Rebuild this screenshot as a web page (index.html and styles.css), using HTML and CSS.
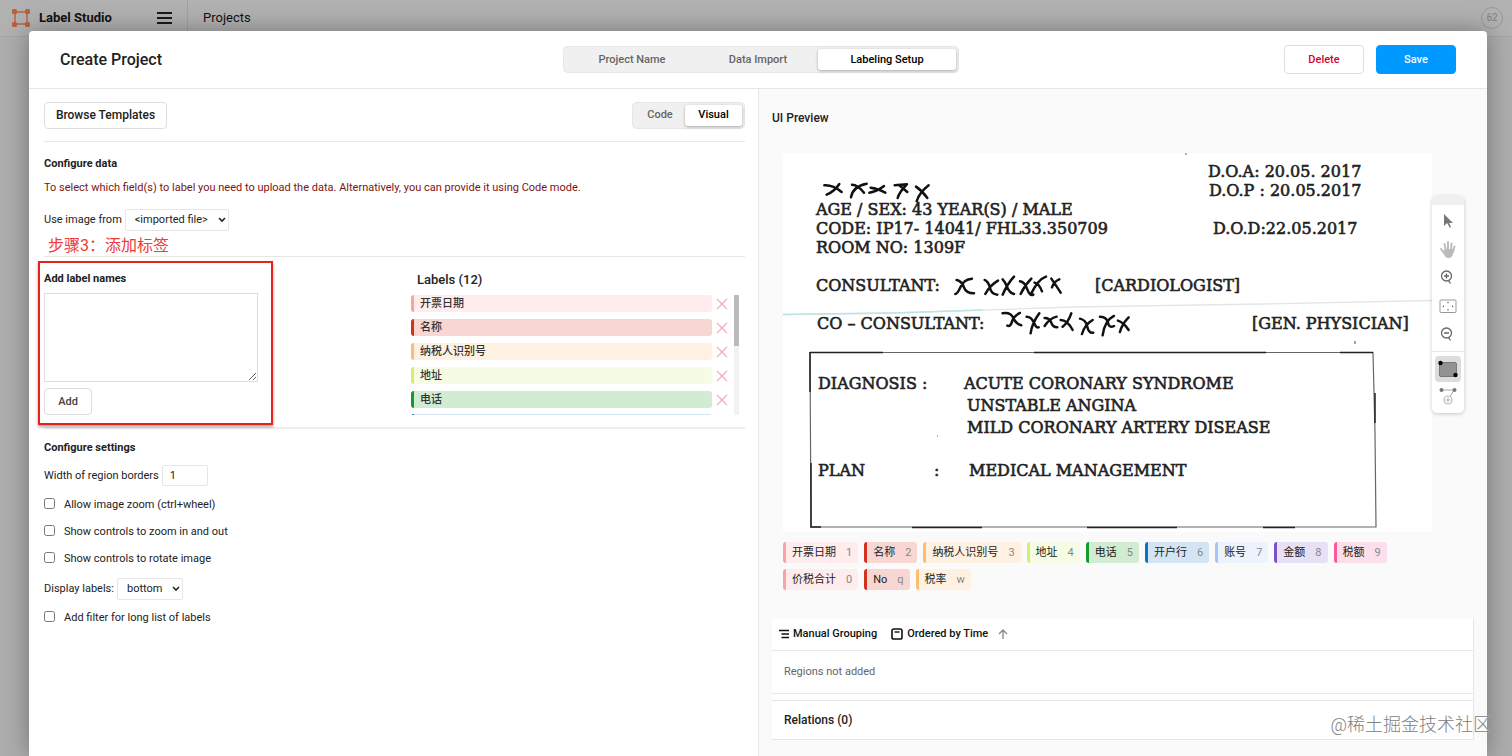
FILE: index.html
```html
<!DOCTYPE html>
<html lang="en">
<head>
<meta charset="utf-8">
<title>Label Studio</title>
<link rel="stylesheet" href="styles.css">
</head>
<body>
<header class="topbar">
  <a class="brand" href="#">
    <svg class="brand-logo" viewBox="0 0 18 18"><g fill="none" stroke="#b9603a" stroke-width="1.4"><path d="M3 3h12v12H3z"/></g><g fill="#b9603a"><rect width="5" height="5" rx="1.5"/><rect x="13" width="5" height="5" rx="1.5"/><rect y="13" width="5" height="5" rx="1.5"/><rect x="13" y="13" width="5" height="5" rx="1.5"/></g></svg>
    <span>Label Studio</span>
  </a>
  <button class="menu" aria-label="Menu"><svg viewBox="0 0 15 12"><path d="M0 1h15M0 6h15M0 11h15" stroke="#1b1b1b" stroke-width="2"/></svg></button>
  <nav class="crumbs"><a href="#">Projects</a></nav>
  <span class="avatar">62</span>
</header>

<main class="modal">
  <header class="modal-head">
    <h1>Create Project</h1>
    <div class="tabs steps">
      <button>Project Name</button><button>Data Import</button><button class="on">Labeling Setup</button>
    </div>
    <div class="actions"><button class="btn danger">Delete</button><button class="btn primary">Save</button></div>
  </header>

  <div class="columns">
    <section class="config">
      <div class="config-bar">
        <button class="btn browse">Browse Templates</button>
        <div class="tabs modes"><button>Code</button><button class="on">Visual</button></div>
      </div>

      <div class="block data">
        <h2>Configure data</h2>
        <p class="warn">To select which field(s) to label you need to upload the data. Alternatively, you can provide it using Code mode.</p>
        <div class="field">
          <label for="src">Use image from</label>
          <span class="select"><select id="src"><option>&lt;imported file&gt;</option></select><svg viewBox="0 0 8 6"><path d="M1 1l3 3 3-3" fill="none" stroke="#222" stroke-width="1.6"/></svg></span>
        </div>
        <p class="note">步骤3：添加标签</p>
      </div>

      <div class="block labels">
        <div class="add">
          <label for="names">Add label names</label>
          <textarea id="names"></textarea>
          <button class="btn small">Add</button>
          <span class="highlight"></span>
        </div>
        <div class="list">
          <h3>Labels (12)</h3>
          <ul>
            <li><span class="tag c1">开票日期</span><button aria-label="Remove"><svg viewBox="0 0 10 10"><path d="M0 0l10 10M10 0L0 10"/></svg></button></li>
            <li><span class="tag c2">名称</span><button aria-label="Remove"><svg viewBox="0 0 10 10"><path d="M0 0l10 10M10 0L0 10"/></svg></button></li>
            <li><span class="tag c3">纳税人识别号</span><button aria-label="Remove"><svg viewBox="0 0 10 10"><path d="M0 0l10 10M10 0L0 10"/></svg></button></li>
            <li><span class="tag c4">地址</span><button aria-label="Remove"><svg viewBox="0 0 10 10"><path d="M0 0l10 10M10 0L0 10"/></svg></button></li>
            <li><span class="tag c5">电话</span><button aria-label="Remove"><svg viewBox="0 0 10 10"><path d="M0 0l10 10M10 0L0 10"/></svg></button></li>
            <li><span class="tag c6"></span></li>
          </ul>
          <span class="track"><span class="thumb"></span></span>
        </div>
      </div>

      <div class="block settings">
        <h2>Configure settings</h2>
        <div class="field"><label for="bw">Width of region borders</label><input id="bw" type="text" value="1"></div>
        <label class="check"><input type="checkbox">Allow image zoom (ctrl+wheel)</label>
        <label class="check"><input type="checkbox">Show controls to zoom in and out</label>
        <label class="check"><input type="checkbox">Show controls to rotate image</label>
        <div class="field display">
          <label for="pos">Display labels:</label>
          <span class="select"><select id="pos"><option>bottom</option></select><svg viewBox="0 0 8 6"><path d="M1 1l3 3 3-3" fill="none" stroke="#222" stroke-width="1.6"/></svg></span>
        </div>
        <label class="check"><input type="checkbox">Add filter for long list of labels</label>
      </div>
    </section>

    <section class="preview">
      <h3>UI Preview</h3>
      <div class="stage">
        <svg class="scan" viewBox="0 0 649 379">
          <rect width="649" height="379" fill="#fff"/>
          <path d="M0 161.500L110 160l180-6 190-3 169-3.500" fill="none" stroke="#dfe8e6" stroke-width="1.300"/>
          <path d="M0 161.500L110 160l90-3" fill="none" stroke="#bfe3e3" stroke-width="1.500"/>
          <g class="scan-text">
            <text x="425" y="24">D.O.A: 20.05. 2017</text>
            <text x="426" y="43">D.O.P : 20.05.2017</text>
            <text x="33" y="62">AGE / SEX: 43 YEAR(S) / MALE</text>
            <text x="33" y="81">CODE: IP17- 14041/ FHL33.350709</text>
            <text x="430" y="81">D.O.D:22.05.2017</text>
            <text x="33" y="100">ROOM NO: 1309F</text>
            <text x="33" y="138">CONSULTANT:</text>
            <text x="312" y="138">[CARDIOLOGIST]</text>
            <text x="34" y="176">CO – CONSULTANT:</text>
            <text x="469" y="176">[GEN. PHYSICIAN]</text>
            <text x="35" y="236">DIAGNOSIS :</text>
            <text x="181" y="236">ACUTE CORONARY SYNDROME</text>
            <text x="184" y="258">UNSTABLE ANGINA</text>
            <text x="184" y="280">MILD CORONARY ARTERY DISEASE</text>
            <text x="35" y="323">PLAN</text>
            <text x="151" y="323">:</text>
            <text x="186" y="323">MEDICAL MANAGEMENT</text>
          </g>
          <g fill="none" stroke="#666" stroke-width="1.200">
            <path d="M27 199.500h563l2 80 1 94.500H28z"/>
            <path d="M27 199.500h73M251 199.500h232M557 199.500h33M27 199v40M28 310v64h10M592 240v30M129 374.500h70M304 374.500h90M480 374.500h32" stroke="#222" stroke-width="1.500"/>
            <path d="M402 1h2M572 188v3M154 283h1"/>
          </g>
          <g transform="translate(-13 -13) scale(.3333)" fill="none" stroke="#111" stroke-width="7.500" stroke-linecap="round" stroke-linejoin="round">
            <path d="M163 136q25-2 52 20M208 132q-14 22-38 32M246 134q18 0 36 24M290 131q-42 8-47 41M302 143q22 2 44 15M342 138q-20 16-44 20M374 136l37-3M388 136l24 20M408 136q-20 20-25 38M438 140q18 12 34 34M476 136q-28 22-36 48"/>
            <path d="M560 420q16 4 22 22t30 18M606 416q-24 2-34 24t-16 22M644 420q12 6 16 24t22 20M684 422q-24 14-38 40M698 418q8 8 14 24t20 20M732 410q-20 22-34 54M750 424q14 2 22 24t18 16M784 416q-20 20-32 46M794 428q14 4 22 26M828 410q-24 8-46 54M844 416q14 20 28 42M868 418q-16 6-22 24"/>
            <path d="M698 520q24-4 32 14t24 22M750 519q-20 10-24 26t-14 12M770 530q14 0 22 18t14 14M808 520q-22 30-26 60M824 534q16 0 20 14t18 14M860 530q-20 4-36 28M872 540q20 0 36 30M904 520q-10 28-26 40M930 536q18 4 22 24t18 18M968 540q-24 14-32 42M990 530q20 0 24 18t18 10M1032 528q-28 14-34 58M1044 542q18 6 32 28M1076 532q-20 20-26 44"/>
          </g>
        </svg>
        <div class="tools">
          <span class="grip"></span>
          <button aria-label="Select"><svg viewBox="0 0 18 18"><path d="M5 2v12l3-3 3 5 1-1-2-4h4z" fill="#777"/></svg></button>
          <button aria-label="Pan"><svg viewBox="0 0 18 18"><path d="M2 9l3 4M5.500 4l1.500 7M9 2v9M12.500 3.500L12 11M15.500 6.500L14 12" stroke="#bbb" stroke-width="1.900" stroke-linecap="round"/><path d="M4 11l2-2h8.500l-.5 5q-1 4-4.500 4T5 14z" fill="#bbb"/></svg></button>
          <button aria-label="Zoom in"><svg viewBox="0 0 18 18"><g fill="none" stroke="#666" stroke-width="1.300"><circle cx="7.500" cy="8" r="5"/><path d="M9.500 12.500l2 3M5 8h5M7.500 5.500v5"/></g></svg></button>
          <button aria-label="Fit"><svg viewBox="0 0 18 18"><rect x="1" y="4" width="16" height="12.500" rx="1" fill="none" stroke="#999"/><path d="M8 7h2L9 5.500zM8 13.500h2L9 15zM5 9.300v2l-1.500-1zM13 9.300v2l1.500-1z" fill="#555"/></svg></button>
          <button aria-label="Zoom out"><svg viewBox="0 0 18 18"><g fill="none" stroke="#666" stroke-width="1.300"><circle cx="7.500" cy="9" r="5"/><path d="M9.500 13.500l2 3M5 9h5"/></g></svg></button>
          <hr>
          <button class="active" aria-label="Rectangle"><svg viewBox="0 0 20 18"><rect x="1.500" y="2.500" width="17" height="14" rx="1.500" fill="#929292" stroke="#777"/><circle cx="2.500" cy="3" r="2.200"/><circle cx="17.500" cy="15" r="2.200"/></svg></button>
          <button aria-label="Keypoint"><svg viewBox="0 0 18 18"><path d="M2 3h13l-4 7" fill="none" stroke="#aaa"/><circle cx="2.500" cy="3" r="2" fill="#777"/><circle cx="15.500" cy="3" r="2" fill="#777"/><circle cx="9" cy="13" r="4" fill="#fff" stroke="#bbb" stroke-width="1.200"/><path d="M6.500 13h5M9 10.500v5" stroke="#bbb" stroke-width="1.200"/></svg></button>
        </div>
      </div>
      <div class="chips">
        <span class="chip c1">开票日期<i>1</i></span><span class="chip c2">名称<i>2</i></span><span class="chip c3">纳税人识别号<i>3</i></span><span class="chip c4">地址<i>4</i></span><span class="chip c5">电话<i>5</i></span><span class="chip c6">开户行<i>6</i></span><span class="chip c7">账号<i>7</i></span><span class="chip c8">金额<i>8</i></span><span class="chip c9">税额<i>9</i></span><span class="chip c1">价税合计<i>0</i></span><span class="chip c2">No<i>q</i></span><span class="chip c3">税率<i>w</i></span>
      </div>
      <div class="panel">
        <div class="panel-bar">
          <button><svg viewBox="0 0 10 10"><path d="M0 1.500h10M2.500 5H10M2.500 8.500H10" stroke="#111" stroke-width="1.500"/></svg>Manual Grouping</button>
          <button><svg class="cal" viewBox="0 0 12 12"><rect x="1" y="1" width="10" height="10" rx="1.800" fill="none" stroke="#111" stroke-width="1.600"/><path d="M3.500 4h5" stroke="#111" stroke-width="1.400"/></svg>Ordered by Time</button>
          <button class="sort" aria-label="Ascending"><svg viewBox="0 0 10 10"><path d="M5 10V1M1 5l4-4 4 4" fill="none" stroke="#888" stroke-width="1.300"/></svg></button>
        </div>
        <p class="empty">Regions not added</p>
        <h4>Relations (0)</h4>
      </div>
    </section>
  </div>
</main>
<div class="watermark">@稀土掘金技术社区</div>
</body>
</html>
```

FILE: styles.css
```css
* { box-sizing: border-box; }
html, body { height: 100%; }
body {
  margin: 0;
  overflow: hidden;
  display: flex;
  flex-direction: column;
  background: #adadad;
  color: #222;
  font: 11px/16px Roboto, "Noto Sans CJK SC", sans-serif;
}
h1, h2, h3, h4, p, ul { margin: 0; padding: 0; font-weight: 500; }
button, input, select, textarea { font: inherit; color: inherit; }
button { padding: 0; border: 0; background: none; }
svg { display: block; }
a { color: inherit; text-decoration: none; }

.topbar {
  flex: none;
  display: flex;
  align-items: center;
  height: 37px;
  padding: 0 9px 0 12px;
  margin-bottom: -6px;
  border-bottom: 1px solid #a2a2a2;
  background: #b1b1b1;
  color: #111;
}
.brand { display: flex; align-items: center; gap: 9px; width: 145px; font-size: 13px; font-weight: 700; }
.brand-logo { width: 18px; height: 18px; }
.menu { width: 15px; }
.crumbs { margin-left: 15px; padding: 10px 15px; border-left: 1px solid #a2a2a2; font-size: 13px; }
.avatar {
  margin-left: auto;
  width: 22px;
  height: 22px;
  border: 1px solid #999;
  border-radius: 50%;
  color: #808080;
  font-size: 10px;
  line-height: 20px;
  text-align: center;
}

.modal {
  position: relative;
  flex: 1;
  display: flex;
  flex-direction: column;
  margin: 0 25px 0 29px;
  border-radius: 4px 4px 0 0;
  background: #fff;
  box-shadow: 0 0 24px rgba(0, 0, 0, .35);
}
.modal-head {
  display: grid;
  grid-template-columns: 1fr auto 1fr;
  align-items: center;
  height: 58px;
  padding: 0 31px;
  border-bottom: 1px solid #e6e6e6;
}
h1 { font-size: 16px; }
.tabs {
  display: flex;
  padding: 3px;
  border-radius: 5px;
  background: #f0f0f0;
  box-shadow: inset 0 0 0 1px #e6e6e6;
  color: #666;
  font-weight: 500;
}
.tabs button { height: 21px; border-radius: 3px; }
.tabs .on { background: #fff; color: #000; box-shadow: 0 1px 3px rgba(0, 0, 0, .3); }
.steps { margin-left: 6px; width: 396px; }
.steps button { flex: 0 0 132px; }
.steps button:nth-child(2) { flex-basis: 120px; }
.steps button:nth-child(3) { flex: 1; }
.actions { display: flex; justify-content: flex-end; gap: 12px; }
.btn { height: 27px; border: 1px solid #ddd; border-radius: 4px; background: #fff; font-weight: 500; }
.actions .btn { width: 80px; height: 29px; }
.actions .danger { color: #d50032; }
.actions .primary { border-color: #0099ff; background: #0099ff; color: #fff; }

.columns { flex: 1; display: grid; grid-template-columns: 1fr 1fr; }
.config { padding: 0 13px 0 15px; }
.config-bar {
  display: flex;
  align-items: center;
  justify-content: space-between;
  height: 53px;
  border-bottom: 1px solid #e6e6e6;
}
.browse { width: 123px; font-size: 12px; }
.modes { width: 113px; }
.modes button { flex: 1; }
.modes .on { flex: 0 0 57px; }
.block { border-bottom: 1px solid #e6e6e6; }
h2 { font-size: 11px; line-height: 16px; font-weight: 700; }
.data { height: 115px; padding-top: 14px; }
.warn { margin: 8px 0; color: #7d1313; font-weight: 400; }
.field { display: flex; align-items: center; gap: 3px; height: 24px; margin-top: 12px; }
.select { display: grid; align-items: center; }
.select select {
  grid-area: 1 / 1;
  height: 22px;
  padding: 0 18px 0 9px;
  border: 1px solid #e6e6e6;
  border-radius: 2px;
  background: #fff;
  appearance: none;
}
.select svg { grid-area: 1 / 1; justify-self: end; width: 8px; margin-right: 3px; pointer-events: none; }
#src { width: 104px; }
#pos { width: 66px; }
.note { margin-top: 2px; padding-left: 4px; color: #f03b3b; font-size: 16px; line-height: 24px; font-weight: 400; }

.labels { display: flex; justify-content: space-between; height: 172px; padding: 0 6px 0 0; border-bottom: 2px solid #eee; }
.add { position: relative; display: flex; flex-direction: column; align-items: flex-start; width: 214px; padding-top: 14px; }
.add label { font-weight: 700; }
textarea { width: 100%; height: 89px; margin: 6px 0; border: 1px solid #ddd; background: #fff; resize: both; }
.small { width: 48px; color: #444; }
.highlight {
  position: absolute;
  inset: 4px -15px 2px -6px;
  border: 2px solid #e8211b;
  box-shadow: 0 2px 3px rgba(0, 0, 0, .35);
  pointer-events: none;
}
.list { display: grid; grid-template: 38px 120px / 1fr 5px; column-gap: 6px; width: 328px; }
.list h3 { grid-column: 1 / 3; padding: 15px 0 0 6px; font-size: 13px; }
.list ul { overflow: hidden; list-style: none; }
.list li { display: flex; align-items: center; gap: 5px; height: 17px; margin-bottom: 7px; }
.list li:nth-child(5) { margin-bottom: 6px; }
.list li button { width: 10px; }
.list li svg { width: 10px; stroke: #f7a8c0; stroke-width: 1.2; overflow: visible; }
.tag { flex: 0 0 301px; height: 17px; padding-left: 6px; border-left-width: 3px; border-left-style: solid; border-radius: 3px; color: #333; line-height: 17px; }
.track { background: #f2f2f2; }
.thumb { display: block; height: 51px; background: #bbb; }

.c1 { border-color: #f9a3a3; background: #ffecec; }
.c2 { border-color: #d3321f; background: #f8d7d3; }
.c3 { border-color: #fcbc74; background: #fff1e2; }
.c4 { border-color: #d5ee6c; background: #f6fce3; }
.c5 { border-color: #149a2e; background: #d2ecd4; }
.c6 { border-color: #0d74c4; background: #d3e5f3; }
.c7 { border-color: #a5c4fa; background: #edf3fd; }
.c8 { border-color: #7b50c8; background: #e8e0f5; }
.c9 { border-color: #f8599f; background: #fbe0ec; }

.settings { padding-top: 11px; border: 0; }
.settings .field { margin: 7px 0 9px; height: 25px; }
.settings input[type="text"] { width: 46px; height: 21px; padding: 0 7px; border: 1px solid #e6e6e6; border-radius: 2px; }
.check { display: flex; align-items: flex-start; gap: 9px; height: 17px; margin-bottom: 10px; }
.check input { width: 11px; height: 11px; margin: 1px 0 0; }
.settings .display { margin: -2px 0 9px; }

.preview { padding: 0 13px; border-left: 1px solid #e6e6e6; background: #fafafa; }
.preview h3 { padding: 20px 0; font-size: 12px; line-height: 18px; }
.stage { display: flex; align-items: flex-start; margin: 6px 10px 10px 11px; }
.scan { flex: 1; min-width: 0; }
.scan-text { font-family: "DejaVu Serif", serif; font-size: 16px; fill: #222; stroke: #222; stroke-width: .6px; }
.tools {
  display: flex;
  flex-direction: column;
  align-items: center;
  width: 32px;
  margin-top: 43px;
  padding-bottom: 3px;
  border-radius: 5px;
  background: #fff;
  box-shadow: 0 1px 4px rgba(0, 0, 0, .2);
}
.grip { width: 100%; height: 9px; margin-bottom: 2px; border-radius: 5px 5px 0 0; background: #f0f0f0; }
.tools button { display: grid; place-items: center; width: 26px; height: 28px; }
.tools svg { width: 18px; height: 18px; }
.tools hr { width: 100%; margin: 4px 0; border: 0; border-top: 1px solid #e6e6e6; }
.tools .active { height: 26px; border-radius: 4px; background: #dcdcdc; }
.tools .active svg { width: 20px; }
.chips { display: flex; flex-wrap: wrap; gap: 6px; margin: 0 20px 0 11px; }
.chip { display: flex; height: 21px; padding: 0 6px; border-left-width: 3px; border-left-style: solid; border-radius: 3px; line-height: 22px; }
.chip i { margin-left: 10px; color: #888; font-style: normal; }
.panel { margin-top: 28px; border: 1px solid #e6e6e6; border-width: 0 1px 1px 0; background: #fff; }
.panel-bar { display: flex; align-items: center; gap: 14px; height: 33px; padding: 0 7px; border-bottom: 1px solid #e6e6e6; }
.panel-bar button { display: flex; align-items: center; gap: 4px; color: #111; font-weight: 500; }
.panel-bar .sort { margin-left: -4px; }
.panel-bar svg { width: 10px; height: 10px; }
.panel-bar .cal { width: 12px; height: 12px; }
.empty { padding: 13px 12px; color: #666; font-weight: 400; border-bottom: 1px solid #e6e6e6; }
.panel h4 { margin-top: 6px; padding: 11px 12px; border-top: 1px solid #e6e6e6; font-size: 12px; }

.watermark {
  position: absolute;
  right: 21px;
  bottom: 17px;
  color: #808080;
  font-size: 18px;
  font-weight: 300;
  line-height: 28px;
  text-shadow: 0 0 2px #fff;
}
```
